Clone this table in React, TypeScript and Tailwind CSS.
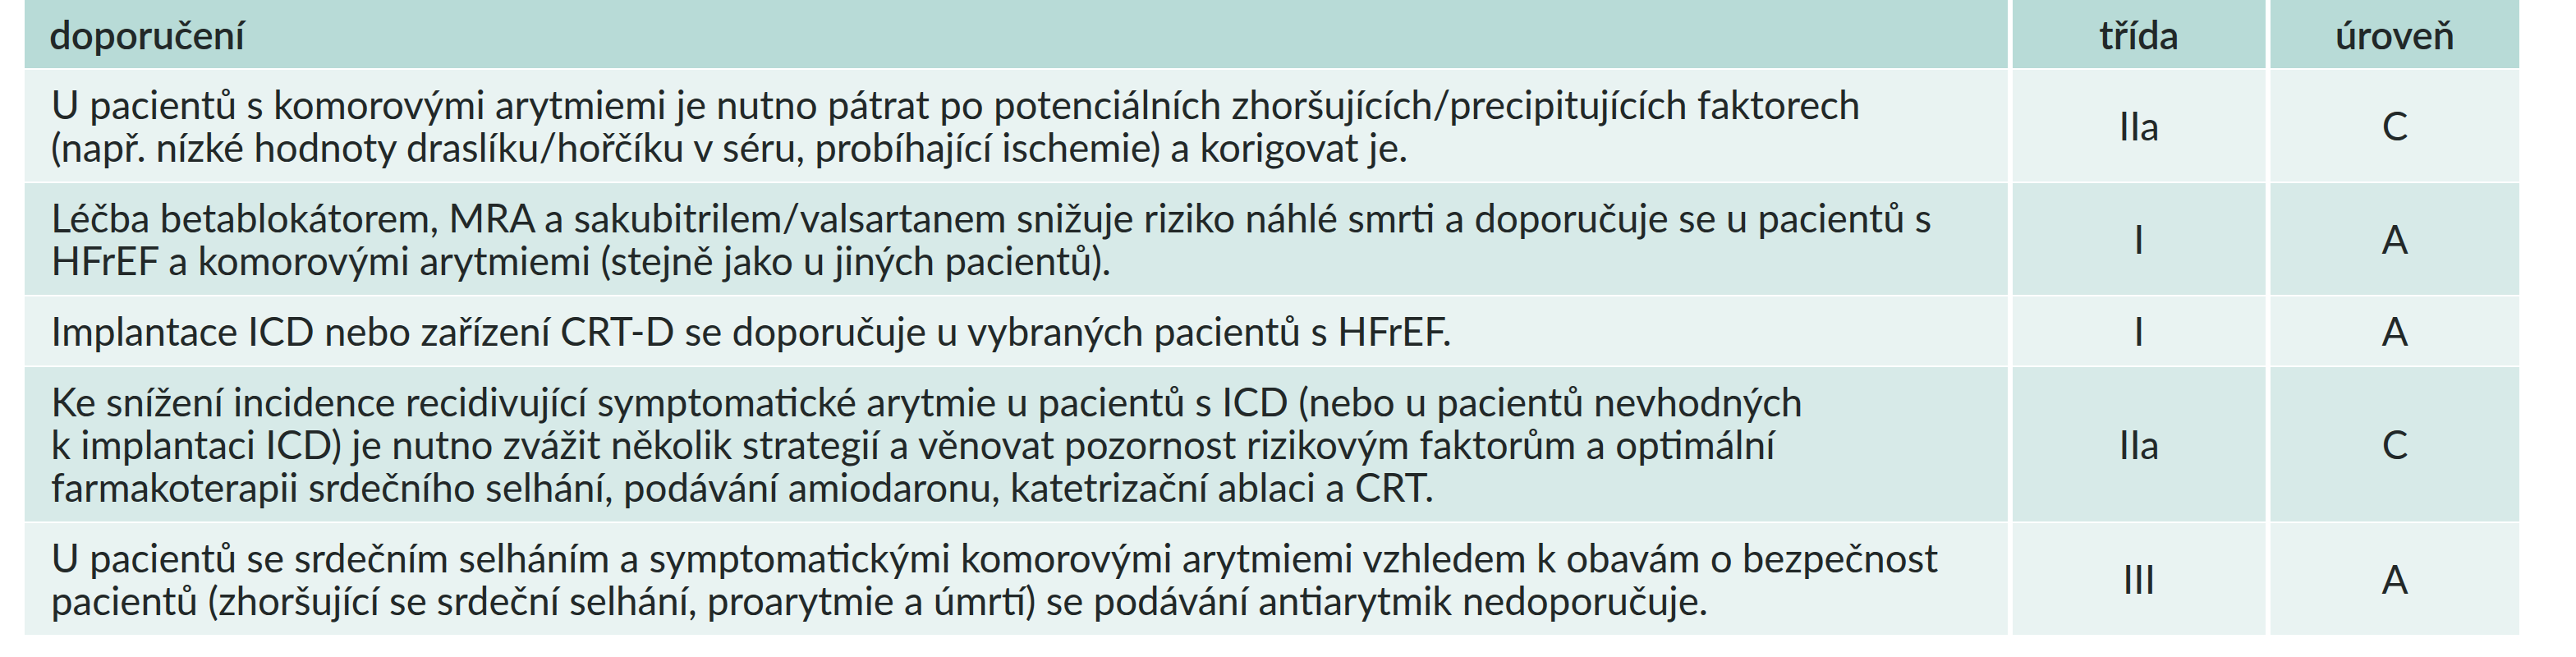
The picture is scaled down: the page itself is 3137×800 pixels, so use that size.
const rows: { text: string[]; cls: string; lvl: string; bg: string }[] = [
  {
    text: [
      "U pacientů s komorovými arytmiemi je nutno pátrat po potenciálních zhoršujících/precipitujících faktorech",
      "(např. nízké hodnoty draslíku/hořčíku v séru, probíhající ischemie) a korigovat je.",
    ],
    cls: "IIa",
    lvl: "C",
    bg: "bg-[#e9f3f2]",
  },
  {
    text: [
      "Léčba betablokátorem, MRA a sakubitrilem/valsartanem snižuje riziko náhlé smrti a doporučuje se u pacientů s",
      "HFrEF a komorovými arytmiemi (stejně jako u jiných pacientů).",
    ],
    cls: "I",
    lvl: "A",
    bg: "bg-[#d7eae8]",
  },
  {
    text: ["Implantace ICD nebo zařízení CRT-D se doporučuje u vybraných pacientů s HFrEF."],
    cls: "I",
    lvl: "A",
    bg: "bg-[#e9f3f2]",
  },
  {
    text: [
      "Ke snížení incidence recidivující symptomatické arytmie u pacientů s ICD (nebo u pacientů nevhodných",
      "k implantaci ICD) je nutno zvážit několik strategií a věnovat pozornost rizikovým faktorům a optimální",
      "farmakoterapii srdečního selhání, podávání amiodaronu, katetrizační ablaci a CRT.",
    ],
    cls: "IIa",
    lvl: "C",
    bg: "bg-[#d7eae8]",
  },
  {
    text: [
      "U pacientů se srdečním selháním a symptomatickými komorovými arytmiemi vzhledem k obavám o bezpečnost",
      "pacientů (zhoršující se srdeční selhání, proarytmie a úmrtí) se podávání antiarytmik nedoporučuje.",
    ],
    cls: "III",
    lvl: "A",
    bg: "bg-[#e9f3f2]",
  },
]

export default function App() {
  return (
    <div className="h-[800px] w-[3137px] bg-white font-['Lato','Noto_Sans',sans-serif] text-[47.5px] text-[#222828]">
      <div className="ml-[30px] grid w-[3038px] grid-cols-[2415px_308px_303px] gap-x-[6px] gap-y-[2px]">
        <div className="flex h-[83px] items-center bg-[#b8dbd7] pl-[30px] font-semibold">doporučení</div>
        <div className="flex h-[83px] items-center justify-center bg-[#b8dbd7] font-semibold">třída</div>
        <div className="flex h-[83px] items-center justify-center bg-[#b8dbd7] font-semibold">úroveň</div>
        {rows.map((r, i) => (
          <div key={i} className="contents">
            <div className={`${r.bg} py-4 pl-[32px] leading-[52px] whitespace-nowrap`}>
              {r.text.map((t, j) => (
                <div key={j}>{t}</div>
              ))}
            </div>
            <div className={`${r.bg} flex items-center justify-center`}>{r.cls}</div>
            <div className={`${r.bg} flex items-center justify-center`}>{r.lvl}</div>
          </div>
        ))}
      </div>
    </div>
  )
}
